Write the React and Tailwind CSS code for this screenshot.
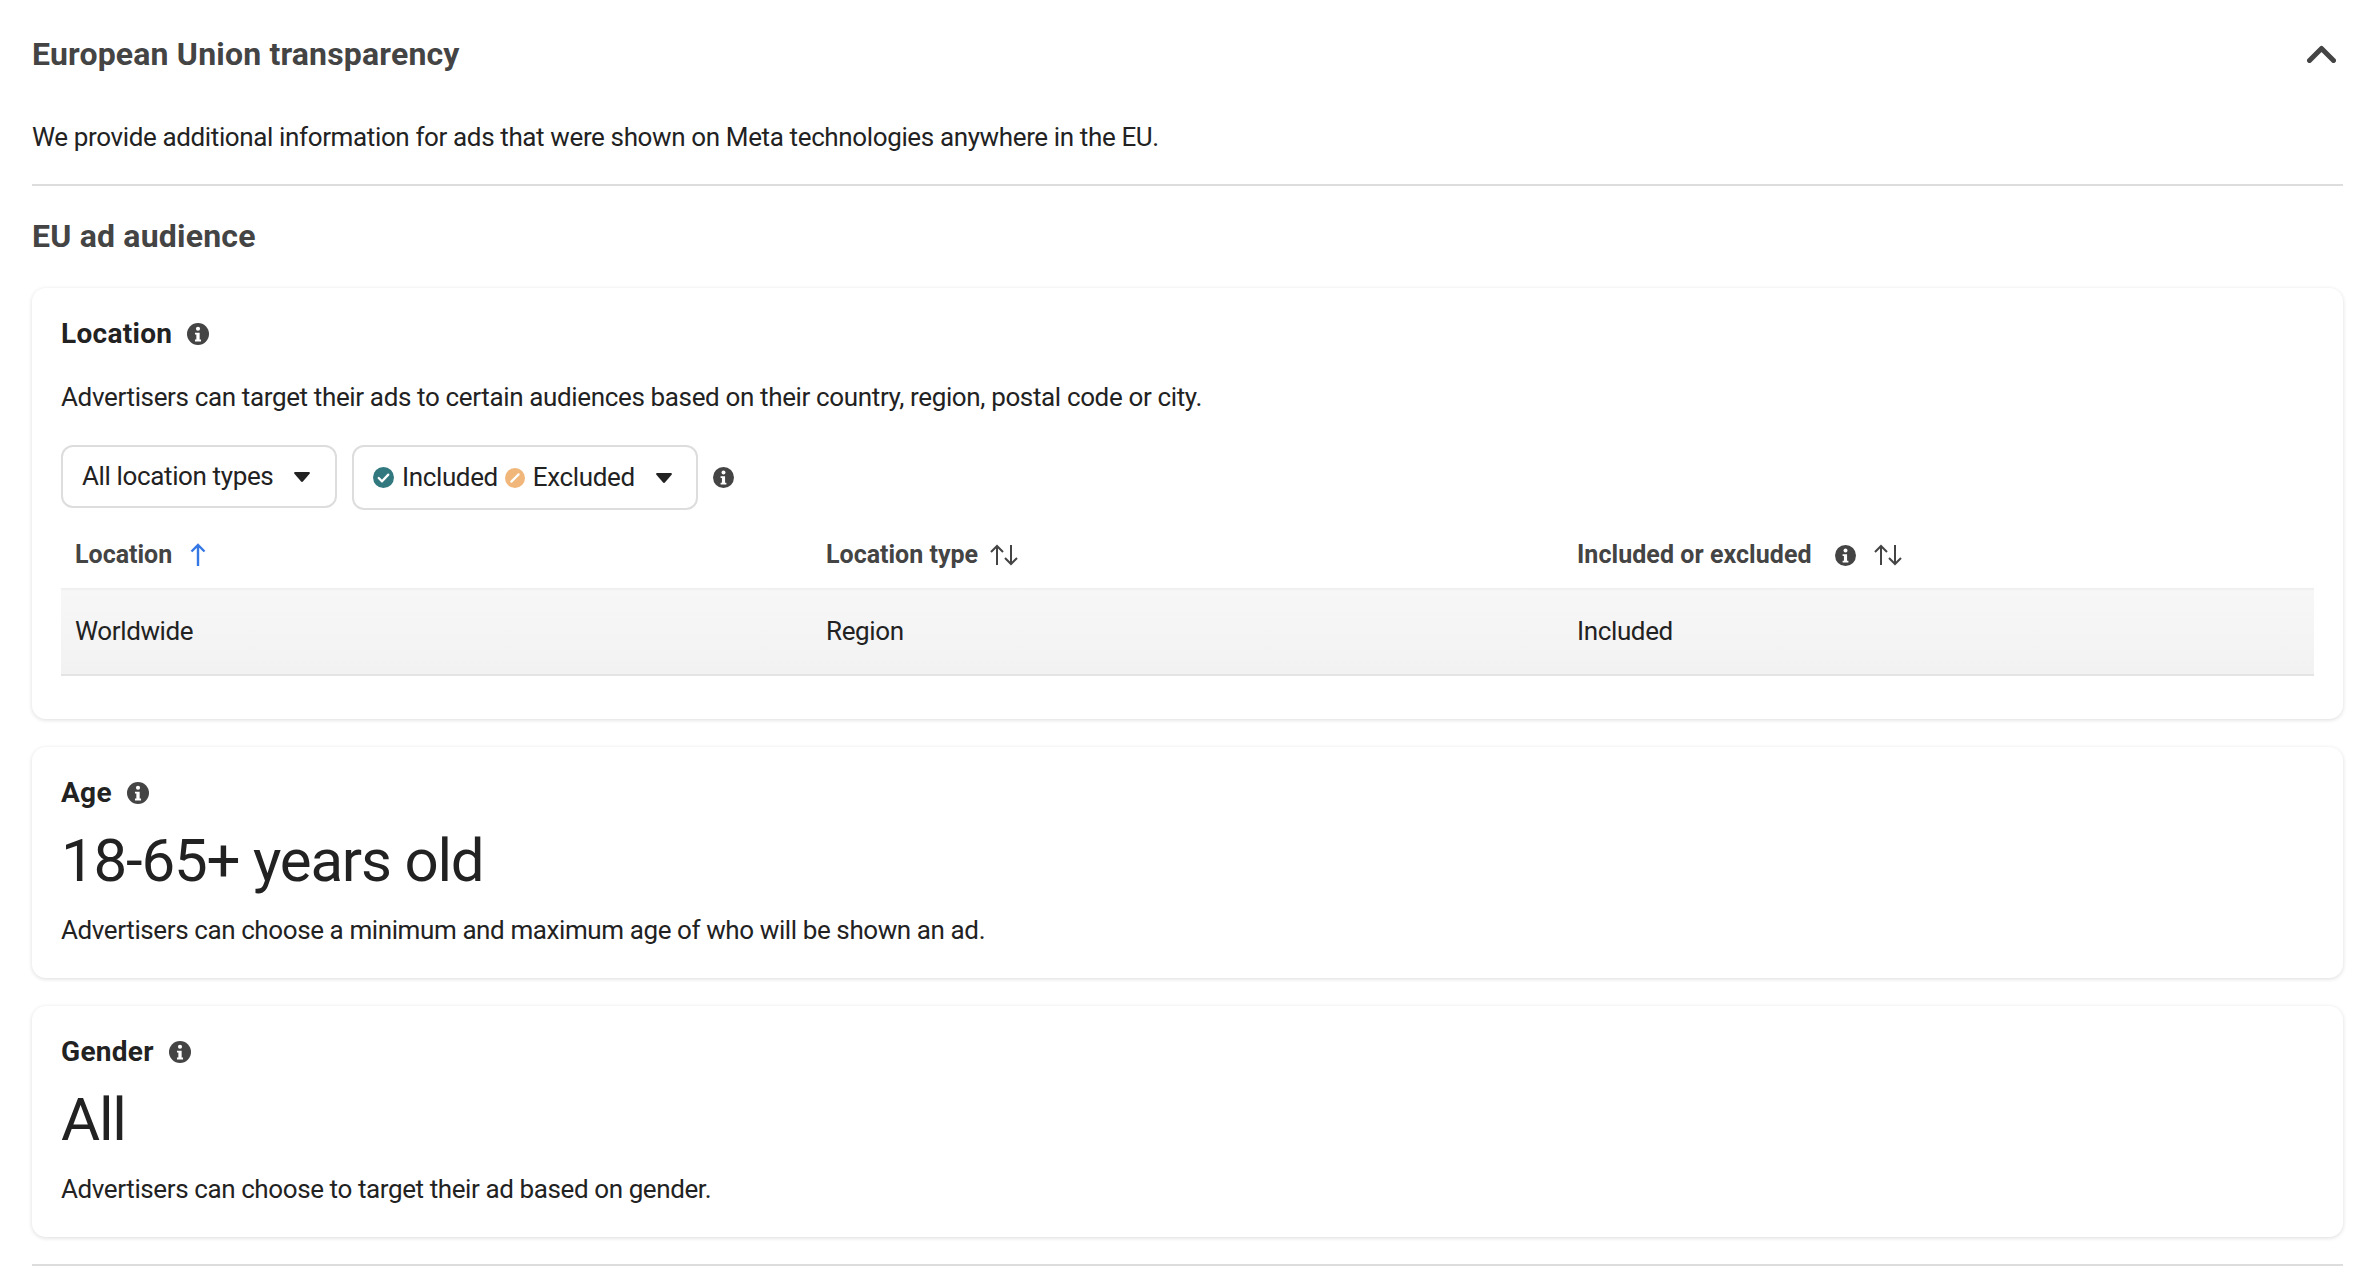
import React from 'react';

const InfoIcon = ({ className }) => (
  <svg viewBox="0 0 16 16" className={className}>
    <circle cx="8" cy="8" r="8" fill="#444444" />
    <circle cx="8" cy="4.2" r="1.5" fill="#fff" />
    <path d="M5.8 7h3.4v5h1v1.4H5.8V12h1V8.4h-1z" fill="#fff" />
  </svg>
);

const Caret = () => (
  <svg viewBox="0 0 16 10" className="w-[16px] h-[10px] ml-[21px]">
    <path d="M1.2 0h13.6c.9 0 1.400 1 .8 1.700L8.900 9.500a1.200 1.200 0 0 1-1.800 0L.4 1.700C-.2 1 .3 0 1.200 0z" fill="#222222" />
  </svg>
);

const SortIcon = () => (
  <svg viewBox="0 0 28 24" className="w-[28px] h-[24px]" fill="none" stroke="#444444" strokeWidth="2">
    <path d="M7 22V3M1 9l6-6 6 6" />
    <path d="M21 2v19M15 15l6 6 6-6" />
  </svg>
);

const CardHeading = ({ title }) => (
  <div className="flex items-center gap-[15px] h-[38px]">
    <h3 className="text-[28px] leading-[38px] font-bold text-[#222222] tracking-[0.3px]">{title}</h3>
    <InfoIcon className="w-[22px] h-[22px]" />
  </div>
);

const StatCard = ({ title, value, desc }) => (
  <div className="h-[231px] rounded-[14px] bg-white shadow-[0_1px_4px_rgba(0,0,0,0.14)] px-[29px] pt-[27px] flex flex-col">
    <CardHeading title={title} />
    <div className="text-[60px] leading-[72px] text-[#222222] mt-[13px] tracking-[-1.200px]">{value}</div>
    <p className="text-[26px] leading-[36px] text-[#222222] mt-[15px] tracking-[-0.400px]">{desc}</p>
  </div>
);

const App = () => {
  return (
    <div className="w-[2374px] h-[1284px] overflow-hidden bg-white font-['Roboto',sans-serif] pl-[32px] pr-[31px]">
      <div className="flex items-center justify-between h-[108px]">
        <h2 className="text-[32px] leading-[40px] font-bold text-[#444444] tracking-[0.180px]">European Union transparency</h2>
        <svg viewBox="0 0 29 18" className="w-[29px] h-[18px] mr-[7px]" fill="none" stroke="#444444" strokeWidth="5" strokeLinecap="round" strokeLinejoin="round">
          <path d="M2.500 15.500 14.500 3.500l12 12" />
        </svg>
      </div>
      <p className="text-[26px] leading-[36px] text-[#222222] mt-[11px] tracking-[-0.370px]">
        We provide additional information for ads that were shown on Meta technologies anywhere in the EU.
      </p>
      <div className="h-[2px] bg-[#dddddd] mt-[29px]" />
      <h2 className="text-[32px] leading-[40px] font-bold text-[#444444] mt-[30px] tracking-[0.200px]">EU ad audience</h2>

      <div className="mt-[32px] h-[431px] rounded-[14px] bg-white shadow-[0_1px_4px_rgba(0,0,0,0.14)] px-[29px] pt-[27px]">
        <CardHeading title="Location" />
        <p className="text-[26px] leading-[36px] text-[#222222] mt-[26px] tracking-[-0.360px]">
          Advertisers can target their ads to certain audiences based on their country, region, postal code or city.
        </p>
        <div className="flex items-start gap-[15px] mt-[30px] text-[26px] tracking-[-0.370px] text-[#222222]">
          <div className="h-[63px] w-[276px] rounded-[12px] border-2 border-[#dddddd] flex items-center pl-[19px]">
            All location types
            <Caret />
          </div>
          <div className="h-[65px] w-[346px] rounded-[12px] border-2 border-[#dddddd] flex items-center pl-[19px]">
            <svg viewBox="0 0 22 22" className="w-[21px] h-[21px] mr-[8px]">
              <circle cx="11" cy="11" r="11" fill="#31797f" />
              <path d="m6 11.500 3.500 3.500L16 8" fill="none" stroke="#fff" strokeWidth="2.400" strokeLinecap="round" strokeLinejoin="round" />
            </svg>
            Included
            <svg viewBox="0 0 22 22" className="w-[20px] h-[20px] ml-[7px] mr-[8px]">
              <circle cx="11" cy="11" r="11" fill="#f0b67a" />
              <path d="M7 15 15 7" fill="none" stroke="#fff" strokeWidth="2.400" strokeLinecap="round" />
            </svg>
            Excluded
            <Caret />
          </div>
          <InfoIcon className="w-[21px] h-[21px] self-center" />
        </div>

        <div className="grid grid-cols-3 h-[78px] items-center pt-[12px]">
          <div className="flex items-center pl-[14px] gap-[18px] text-[25px] font-bold text-[#444444]">
            Location
            <svg viewBox="0 0 16 24" className="w-[16px] h-[24px]" fill="none" stroke="#3578e5" strokeWidth="2.400">
              <path d="M8 23V2M1.500 8.500 8 2l6.500 6.500" />
            </svg>
          </div>
          <div className="flex items-center pl-[14px] gap-[12px] text-[25px] font-bold text-[#444444]">
            Location type
            <SortIcon />
          </div>
          <div className="flex items-center pl-[14px] text-[25px] font-bold text-[#444444] tracking-[0.050px]">
            Included or excluded
            <InfoIcon className="w-[21px] h-[21px] ml-[23px] mr-[18px]" />
            <SortIcon />
          </div>
        </div>
        <div className="grid grid-cols-3 h-[88px] items-center bg-linear-to-b from-[#f7f7f7] to-[#f2f2f2] border-b-2 border-[#e4e4e4] shadow-[inset_0_3px_3px_-2px_rgba(0,0,0,0.06)] text-[26px] tracking-[-0.370px] text-[#222222]">
          <div className="pl-[14px]">Worldwide</div>
          <div className="pl-[14px]">Region</div>
          <div className="pl-[14px]">Included</div>
        </div>
      </div>

      <div className="mt-[28px] flex flex-col gap-[28px]">
        <StatCard title="Age" value="18-65+ years old" desc="Advertisers can choose a minimum and maximum age of who will be shown an ad." />
        <StatCard title="Gender" value="All" desc="Advertisers can choose to target their ad based on gender." />
      </div>
      <div className="h-[2px] bg-[#dddddd] mt-[27px]" />
    </div>
  );
};

export default App;
